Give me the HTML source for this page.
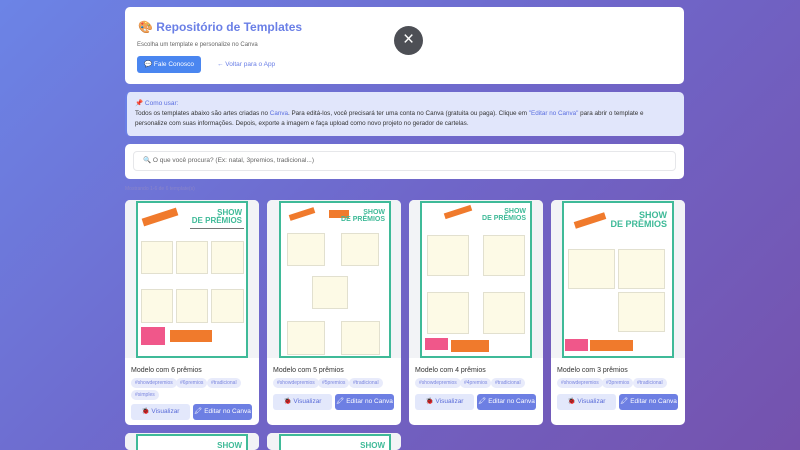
<!DOCTYPE html>
<html style="width:800px;height:450px;overflow:hidden"><head><meta charset="utf-8"><style>
*{box-sizing:border-box;margin:0;padding:0}
html{background:#6f66c9}
body{width:800px;height:450px;overflow:hidden;font-family:"Liberation Sans","DejaVu Sans",sans-serif;background:linear-gradient(135deg,#6c84e6 0%,#6f66c9 50%,#7552ad 100%);position:relative}
.panel{position:absolute;left:125px;width:559px;background:#fff;border-radius:5px}
.card{position:absolute;top:200px;width:134px;height:225px;background:#fff;border-radius:5px;overflow:hidden}
.imgarea{position:absolute;left:0;top:0;width:134px;height:158px;background:#f2f3f6}
.poster{position:absolute;top:1px;width:112px;height:157px;background:#fff;border:2px solid #3fba98;overflow:hidden}
.b{position:absolute;background:#fdfae6;border:1px solid #e2e0cf}
.pk{position:absolute;background:#f0578a}
.or{position:absolute;background:#f07a2c}
.rib{position:absolute;background:#f07a2c;transform:rotate(-18deg)}
.show{position:absolute;color:#3fba98;font-weight:bold;font-size:8px;line-height:8px;text-align:right;white-space:nowrap}
.title{position:absolute;left:6px;top:167px;font-size:7px;color:#333}
.tag{position:absolute;height:10px;border-radius:5px;background:#e8ebfb;color:#7b86df;font-size:5px;line-height:10px;padding:0 4px}
.btn1{position:absolute;left:6px;width:59px;height:16px;background:#e3e8fb;border-radius:3px;color:#5a6bd8;font-size:6.5px;line-height:16px;text-align:center}
.btn2{position:absolute;left:68px;width:59px;height:16px;background:#6d7fe3;border-radius:3px;color:#fff;font-size:6.5px;line-height:16px;text-align:center}
.sm{position:absolute;height:2px;background:#777}
</style></head><body>
<div class="panel" style="top:7px;height:77px">
 <div style="position:absolute;left:13px;top:13px;font-size:12px;font-weight:bold;color:#6a7fe6">🎨 Repositório de Templates</div>
 <div style="position:absolute;left:12px;top:35px;font-size:6px;color:#666">Escolha um template e personalize no Canva</div>
 <div style="position:absolute;left:12px;top:49px;width:64px;height:17px;background:#4a86f0;border-radius:3px;color:#fff;font-size:6.5px;line-height:17px;text-align:center">💬 Fale Conosco</div>
 <div style="position:absolute;left:92px;top:54px;font-size:6.5px;color:#6a7fe6">← Voltar para o App</div>
</div>
<div style="position:absolute;left:394px;top:26px;width:29px;height:29px;border-radius:50%;background:#4d4f55;color:#fff;font-size:19px;line-height:28px;text-align:center">×</div>
<div class="panel" style="top:92px;height:44px;background:#e1e6fb;border-left:2px solid #6a7fe6">
 <div style="position:absolute;left:8px;top:7px;font-size:6.5px;color:#5a6ee0">📌 Como usar:</div>
 <div style="position:absolute;left:8px;top:17px;width:530px;font-size:6.3px;line-height:10px;color:#333">Todos os templates abaixo são artes criadas no <span style="color:#5a6ee0">Canva</span>. Para editá-los, você precisará ter uma conta no Canva (gratuita ou paga). Clique em <span style="color:#5a6ee0">"Editar no Canva"</span> para abrir o template e personalize com suas informações. Depois, exporte a imagem e faça upload como novo projeto no gerador de cartelas.</div>
</div>
<div class="panel" style="top:144px;height:35px">
 <div style="position:absolute;left:8px;top:7px;width:543px;height:20px;border:1px solid #e6e7ea;border-radius:4px;font-size:6.5px;line-height:18px;color:#666;padding-left:9px">🔍 O que você procura? (Ex: natal, 3premios, tradicional...)</div>
</div>
<div style="position:absolute;left:125px;top:186px;font-size:5px;color:#8a84c8">Mostrando 1-6 de 6 template(s)</div>

<div class="card" style="left:125px"><div class="imgarea"></div>
 <div class="poster" style="left:11px">
  <div class="rib" style="left:4px;top:10px;width:36px;height:8px"></div>
  <div class="show" style="right:4px;top:6px">SHOW<br>DE PRÊMIOS</div>
  <div class="sm" style="left:52px;top:25px;width:54px;height:1px"></div>
  <div class="b" style="left:3px;top:38px;width:32px;height:33px"></div>
  <div class="b" style="left:38px;top:38px;width:32px;height:33px"></div>
  <div class="b" style="left:73px;top:38px;width:33px;height:33px"></div>
  <div class="b" style="left:3px;top:86px;width:32px;height:34px"></div>
  <div class="b" style="left:38px;top:86px;width:32px;height:34px"></div>
  <div class="b" style="left:73px;top:86px;width:33px;height:34px"></div>
  <div class="pk" style="left:3px;top:124px;width:24px;height:18px"></div>
  <div class="or" style="left:32px;top:127px;width:42px;height:12px"></div>
 </div>
 <div class="title">Modelo com 6 prêmios</div>
 <div class="tag" style="left:6px;top:178px">#showdepremios</div>
 <div class="tag" style="left:51px;top:178px">#6premios</div>
 <div class="tag" style="left:82px;top:178px">#tradicional</div>
 <div class="tag" style="left:6px;top:190px">#simples</div>
 <div class="btn1" style="top:204px">🐞 Visualizar</div><div class="btn2" style="top:204px">🖍 Editar no Canva</div>
</div>
<div class="card" style="left:267px"><div class="imgarea"></div>
 <div class="poster" style="left:12px">
  <div class="rib" style="left:8px;top:8px;width:26px;height:6px"></div>
  <div class="or" style="left:48px;top:7px;width:20px;height:8px"></div>
  <div class="show" style="right:4px;top:6px;font-size:7px;line-height:7px">SHOW<br>DE PRÊMIOS</div>
  <div class="b" style="left:6px;top:30px;width:38px;height:33px"></div>
  <div class="b" style="left:60px;top:30px;width:38px;height:33px"></div>
  <div class="b" style="left:31px;top:73px;width:36px;height:33px"></div>
  <div class="b" style="left:6px;top:118px;width:38px;height:34px"></div>
  <div class="b" style="left:60px;top:118px;width:39px;height:34px"></div>
 </div>
 <div class="title">Modelo com 5 prêmios</div>
 <div class="tag" style="left:6px;top:178px">#showdepremios</div>
 <div class="tag" style="left:51px;top:178px">#5premios</div>
 <div class="tag" style="left:82px;top:178px">#tradicional</div>
 <div class="btn1" style="top:194px">🐞 Visualizar</div><div class="btn2" style="top:194px">🖍 Editar no Canva</div>
</div>
<div class="card" style="left:409px"><div class="imgarea"></div>
 <div class="poster" style="left:11px">
  <div class="rib" style="left:22px;top:6px;width:28px;height:6px"></div>
  <div class="show" style="right:4px;top:5px;font-size:7px;line-height:7px">SHOW<br>DE PRÊMIOS</div>
  <div class="b" style="left:5px;top:32px;width:42px;height:41px"></div>
  <div class="b" style="left:61px;top:32px;width:42px;height:41px"></div>
  <div class="b" style="left:5px;top:89px;width:42px;height:42px"></div>
  <div class="b" style="left:61px;top:89px;width:42px;height:42px"></div>
  <div class="pk" style="left:3px;top:135px;width:23px;height:12px"></div>
  <div class="or" style="left:29px;top:137px;width:38px;height:12px"></div>
 </div>
 <div class="title">Modelo com 4 prêmios</div>
 <div class="tag" style="left:6px;top:178px">#showdepremios</div>
 <div class="tag" style="left:51px;top:178px">#4premios</div>
 <div class="tag" style="left:82px;top:178px">#tradicional</div>
 <div class="btn1" style="top:194px">🐞 Visualizar</div><div class="btn2" style="top:194px">🖍 Editar no Canva</div>
</div>
<div class="card" style="left:551px"><div class="imgarea"></div>
 <div class="poster" style="left:11px">
  <div class="rib" style="left:10px;top:14px;width:32px;height:7px"></div>
  <div class="show" style="right:5px;top:8px;font-size:9px;line-height:9px">SHOW<br>DE PRÊMIOS</div>
  <div class="b" style="left:4px;top:46px;width:47px;height:40px"></div>
  <div class="b" style="left:54px;top:46px;width:47px;height:40px"></div>
  <div class="b" style="left:54px;top:89px;width:47px;height:40px"></div>
  <div class="pk" style="left:1px;top:136px;width:23px;height:12px"></div>
  <div class="or" style="left:26px;top:137px;width:43px;height:11px"></div>
 </div>
 <div class="title">Modelo com 3 prêmios</div>
 <div class="tag" style="left:6px;top:178px">#showdepremios</div>
 <div class="tag" style="left:51px;top:178px">#3premios</div>
 <div class="tag" style="left:82px;top:178px">#tradicional</div>
 <div class="btn1" style="top:194px">🐞 Visualizar</div><div class="btn2" style="top:194px">🖍 Editar no Canva</div>
</div>
<div class="card" style="left:125px;top:433px;height:17px"><div class="imgarea" style="height:17px"></div><div class="poster" style="left:11px;height:17px;border-bottom:none"><div class="show" style="right:4px;top:6px">SHOW</div></div></div>
<div class="card" style="left:267px;top:433px;height:17px"><div class="imgarea" style="height:17px"></div><div class="poster" style="left:12px;height:17px;border-bottom:none"><div class="show" style="right:4px;top:6px">SHOW</div></div></div>
</body></html>
